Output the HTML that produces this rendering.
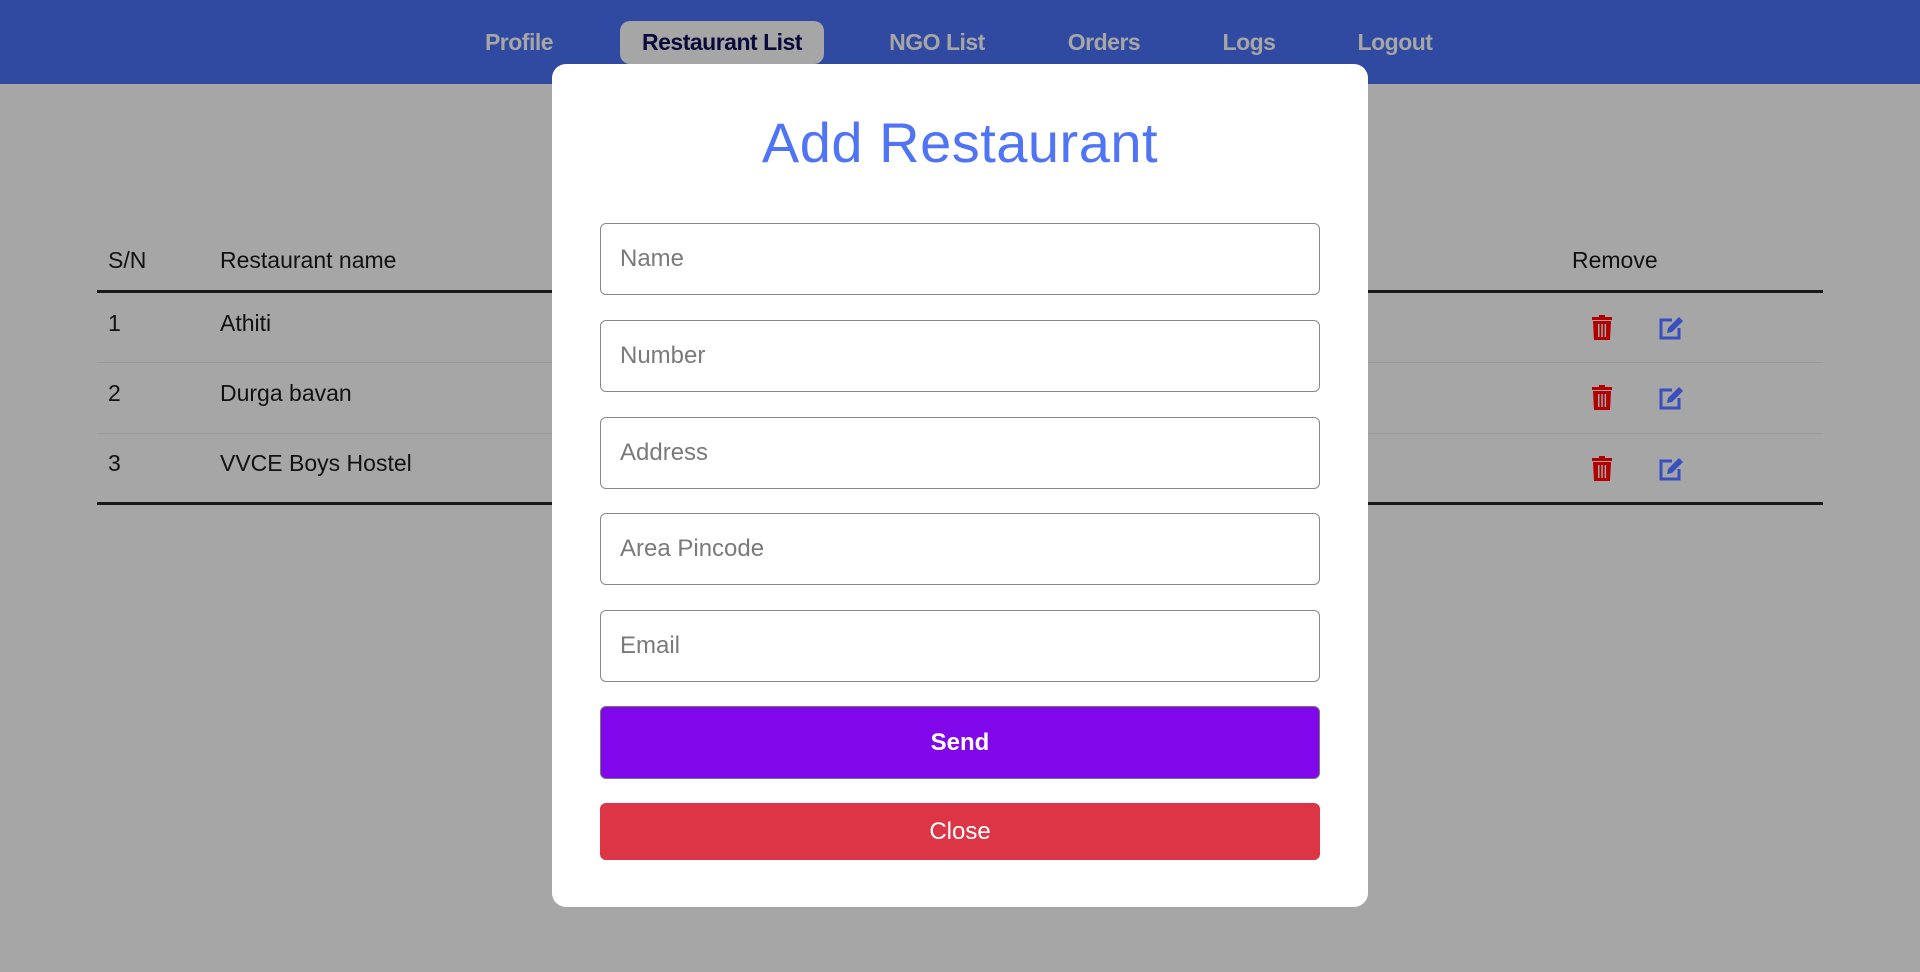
<!DOCTYPE html>
<html><head><meta charset="utf-8"><style>
*{box-sizing:border-box;margin:0;padding:0}
body{width:1920px;height:972px;overflow:hidden;background:#a6a6a6;font-family:"Liberation Sans",sans-serif;position:relative}
.nav{position:absolute;left:0;top:0;width:1920px;height:84px;background:#2f4aa0}
.ni{position:absolute;top:21px;height:43px;line-height:43px;font-size:23px;font-weight:bold;color:#a6a6a6;letter-spacing:-0.5px;transform:translateX(-50%);white-space:nowrap}
.ni.act{background:#a6a6a6;color:#0a0a3a;border-radius:10px;width:204px;text-align:center}
.t{position:absolute;font-size:23px;color:#111}
.line{position:absolute;left:97px;width:1726px}
.modal{position:absolute;left:552px;top:64px;width:816px;height:843px;background:#fff;border-radius:14px}
.title{position:absolute;left:0;width:816px;top:46px;text-align:center;font-size:56px;color:#4f74f5;font-weight:500;letter-spacing:0.5px}
.inp{position:absolute;left:48px;width:720px;height:72px;border:1px solid #888;border-radius:6px;font-size:24px;color:#7a7a7a;padding-left:19px;line-height:70px}
.btn{position:absolute;left:48px;width:720px;border-radius:6px;color:#fff;text-align:center;font-size:24px}
.ic{position:absolute}
</style></head><body>
<div class="nav">
<div class="ni" style="left:519px">Profile</div>
<div class="ni act" style="left:722px">Restaurant List</div>
<div class="ni" style="left:937px">NGO List</div>
<div class="ni" style="left:1104px">Orders</div>
<div class="ni" style="left:1249px">Logs</div>
<div class="ni" style="left:1395px">Logout</div>
</div>
<div class="t" style="left:108px;top:247px">S/N</div>
<div class="t" style="left:220px;top:247px">Restaurant name</div>
<div class="t" style="left:1572px;top:247px">Remove</div>
<div class="line" style="top:290px;height:3px;background:#1a1a1a"></div>
<div class="t" style="left:108px;top:310px">1</div><div class="t" style="left:220px;top:310px">Athiti</div>
<div class="line" style="top:362px;height:1px;background:#999"></div>
<div class="t" style="left:108px;top:380px">2</div><div class="t" style="left:220px;top:380px">Durga bavan</div>
<div class="line" style="top:433px;height:1px;background:#999"></div>
<div class="t" style="left:108px;top:450px">3</div><div class="t" style="left:220px;top:450px">VVCE Boys Hostel</div>
<div class="line" style="top:502px;height:3px;background:#1a1a1a"></div>

<svg class="ic" style="left:1591px;top:315px" width="22" height="25" viewBox="0 0 22 25"><rect x="1" y="2" width="20" height="3" fill="#b00000"/><rect x="8" y="0" width="6" height="3" fill="#b00000"/><path d="M2 6h18l-1 19H3z" fill="#b00000"/><rect x="7" y="9" width="1.5" height="13" fill="#a6a6a6"/><rect x="10.3" y="9" width="1.5" height="13" fill="#a6a6a6"/><rect x="13.6" y="9" width="1.5" height="13" fill="#a6a6a6"/></svg>
<svg class="ic" style="left:1591px;top:385px" width="22" height="25" viewBox="0 0 22 25"><rect x="1" y="2" width="20" height="3" fill="#b00000"/><rect x="8" y="0" width="6" height="3" fill="#b00000"/><path d="M2 6h18l-1 19H3z" fill="#b00000"/><rect x="7" y="9" width="1.5" height="13" fill="#a6a6a6"/><rect x="10.3" y="9" width="1.5" height="13" fill="#a6a6a6"/><rect x="13.6" y="9" width="1.5" height="13" fill="#a6a6a6"/></svg>
<svg class="ic" style="left:1591px;top:456px" width="22" height="25" viewBox="0 0 22 25"><rect x="1" y="2" width="20" height="3" fill="#b00000"/><rect x="8" y="0" width="6" height="3" fill="#b00000"/><path d="M2 6h18l-1 19H3z" fill="#b00000"/><rect x="7" y="9" width="1.5" height="13" fill="#a6a6a6"/><rect x="10.3" y="9" width="1.5" height="13" fill="#a6a6a6"/><rect x="13.6" y="9" width="1.5" height="13" fill="#a6a6a6"/></svg>

<svg class="ic" style="left:1658px;top:315px" width="28" height="25" viewBox="0 0 28 25"><path d="M14 5H3v18h18V13" fill="none" stroke="#3a4fbf" stroke-width="3"/><path d="M9 18l1-5L21 2l4 4L14 17z" fill="#3a4fbf"/></svg>
<svg class="ic" style="left:1658px;top:385px" width="28" height="25" viewBox="0 0 28 25"><path d="M14 5H3v18h18V13" fill="none" stroke="#3a4fbf" stroke-width="3"/><path d="M9 18l1-5L21 2l4 4L14 17z" fill="#3a4fbf"/></svg>
<svg class="ic" style="left:1658px;top:456px" width="28" height="25" viewBox="0 0 28 25"><path d="M14 5H3v18h18V13" fill="none" stroke="#3a4fbf" stroke-width="3"/><path d="M9 18l1-5L21 2l4 4L14 17z" fill="#3a4fbf"/></svg>

<div class="modal">
<div class="title">Add Restaurant</div>
<div class="inp" style="top:159px">Name</div>
<div class="inp" style="top:256px">Number</div>
<div class="inp" style="top:353px">Address</div>
<div class="inp" style="top:449px">Area Pincode</div>
<div class="inp" style="top:546px">Email</div>
<div class="btn" style="top:642px;height:73px;line-height:71px;background:#7f07ea;border:1px solid #777;font-weight:bold">Send</div>
<div class="btn" style="top:739px;height:57px;line-height:57px;background:#dc3545">Close</div>
</div>
</body></html>
